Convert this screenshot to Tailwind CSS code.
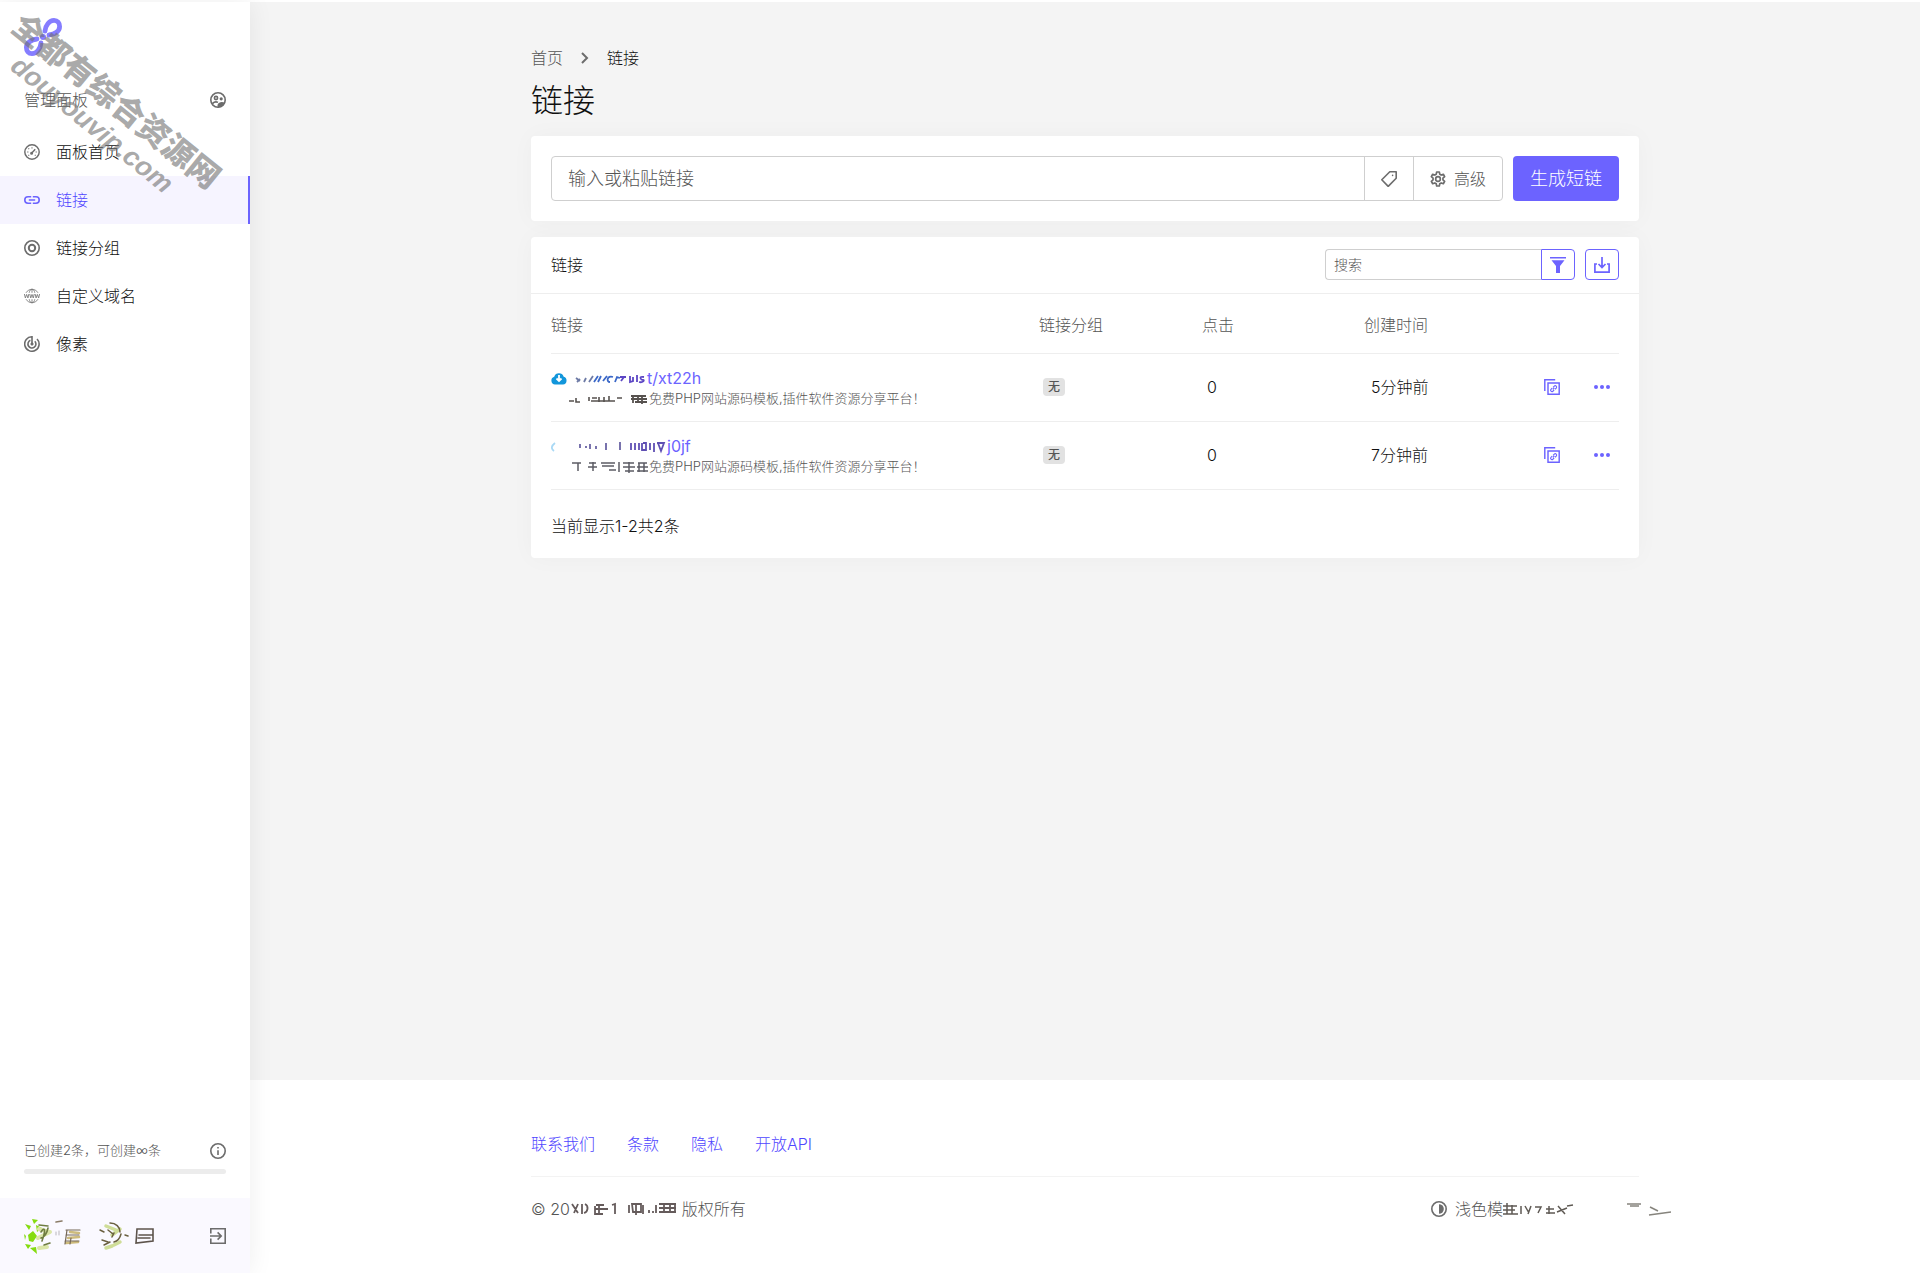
<!DOCTYPE html>
<html lang="zh-CN">
<head>
<meta charset="utf-8">
<title>链接</title>
<script src="https://cdn.jsdelivr.net/npm/@tailwindcss/browser@4"></script>
</head>
<body class="relative min-h-screen bg-white pt-[2px] pr-px text-base text-[#101010] [font-family:Inter,'Noto_Sans_CJK_SC',sans-serif] font-light">
<div class="flex min-h-[calc(100vh-2px)]">

  <aside class="relative z-10 flex w-[250px] shrink-0 flex-col bg-white shadow-[0_0_24px_rgba(0,0,0,0.07)]">
    <a href="#" aria-label="首页" class="mt-4 ml-6 block size-[38px]">
      <svg class="size-full" viewBox="0 0 38 38" fill="none" stroke="#857dff" stroke-width="4.800" stroke-linecap="round">
        <path d="M21 13C21.500 7 25.500 2.400 30 2.400C33.500 2.400 35.600 5 35.600 8.500C35.600 13 31 16.500 25 17"/>
        <path d="M17 25C16.500 31 12.500 35.600 8 35.600C4.500 35.600 2.400 33 2.400 29.500C2.400 25 7 21.500 13 21"/>
        <circle cx="19" cy="19" r="3" fill="#857dff" stroke="none"/>
      </svg>
    </a>
    <div class="mt-8 flex h-6 items-center justify-between px-6 text-[#555]">
      <span>管理面板</span>
      <svg class="size-4" viewBox="0 0 20 20" fill="none" stroke="#6c6c6c" stroke-width="2"><circle cx="10" cy="10" r="9"/><circle cx="7.500" cy="7.500" r="2"/><circle cx="14" cy="8.500" r="1" /><path d="M3 14.500c2-2 5-2.500 7-1.500"/><path d="M10.500 18.500c-1-4 3-6 7-4.500c-1.500 2.500-4 4-7 4.500z" fill="#6c6c6c"/></svg>
    </div>
    <nav class="mt-4 flex flex-col text-[#101010]">
      <a href="#" class="flex h-12 items-center gap-4 px-6">
        <svg class="size-4" viewBox="0 0 20 20" fill="none" stroke="#6c6c6c" stroke-width="1.800"><circle cx="10" cy="10" r="9"/><path d="M9.500 11.500l4.500-5"/><circle cx="9.500" cy="11.500" r="1" /><path d="M4 10h1.500M10 4v1.500M5.500 5.500l1 1M14.500 10H16M5.500 14.500l1-1M14.500 14.500l-1-1" stroke-width="1.300"/></svg>
        <span>面板首页</span>
      </a>
      <a href="#" aria-current="page" class="flex h-12 items-center gap-4 border-r-2 border-[#6c63ff] bg-[#f6f4ff] px-6 text-[#5046ff]">
        <svg class="size-4" viewBox="0 0 20 20" fill="none" stroke="#6c63ff" stroke-width="2"><path d="M9 6H5a4 4 0 0 0 0 8h4M11 6h4a4 4 0 0 1 0 8h-4M6 10h8"/></svg>
        <span>链接</span>
      </a>
      <a href="#" class="flex h-12 items-center gap-4 px-6">
        <svg class="size-4" viewBox="0 0 20 20" fill="none" stroke="#6c6c6c" stroke-width="2"><circle cx="10" cy="10" r="9"/><circle cx="10" cy="10" r="4" stroke-width="2.500"/></svg>
        <span>链接分组</span>
      </a>
      <a href="#" class="flex h-12 items-center gap-4 px-6">
        <svg class="size-4" viewBox="0 0 20 20" fill="none" stroke="#7a7a7a" stroke-width="1.100"><path d="M2.500 6C6 .2 14 .2 17.500 6M2.500 14C6 19.800 14 19.800 17.500 14M6.500 6c.5-2.500 1.500-4.500 3.500-4.500S13 3.500 13.500 6M6.500 14c.5 2.500 1.500 4.500 3.500 4.500s3-2 3.500-4.500M10 1.500V6M10 14v4.500"/><path d="M.5 7.500l1.200 5L3.300 8l1.600 4.500 1.200-5M7.200 7.500l1.200 5L10 8l1.600 4.500 1.200-5M13.900 7.500l1.200 5L16.700 8l1.600 4.500 1.200-5"/></svg>
        <span>自定义域名</span>
      </a>
      <a href="#" class="flex h-12 items-center gap-4 px-6">
        <svg class="size-4" viewBox="0 0 20 20" fill="none" stroke="#6c6c6c" stroke-width="2"><path d="M16.300 3.700A9 9 0 1 1 10 1v9"/><path d="M13.500 6.500A5 5 0 1 1 8 5.400"/><circle cx="10" cy="10" r="1.500" fill="#6c6c6c" stroke-width="1"/></svg>
        <span>像素</span>
      </a>
    </nav>

    <div class="mt-auto flex h-5 items-center justify-between px-6 text-[13px] text-[#555]">
      <span>已创建2条，可创建∞条</span>
      <svg class="size-4" viewBox="0 0 20 20" fill="none" stroke="#6c6c6c" stroke-width="2"><circle cx="10" cy="10" r="9"/><path d="M10 9v6M10 5v2"/></svg>
    </div>
    <div class="mx-6 mt-2 mb-6 h-[5px] rounded bg-[#ececec]"></div>
    <div class="flex h-[75px] items-center justify-between bg-[#faf9ff] px-6">
      <svg class="h-9 w-36" viewBox="0 0 144 36" aria-hidden="true">
        <g fill="#85dc10"><path d="M1 6l6 2-2 4zM8 1l6 1-4 4zM4 17l5-4 4 5-4 6-4-1zM0 16l2 2-1 4zM1 26l6 1-3 4zM6 30l6-1 1 7zM12 7l6 3-5 4z"/></g>
        <g fill="none" stroke-linecap="round"><path d="M15 11l10 3M14 20l12-6M15 30l8-1" stroke="#dbe6a8" stroke-width="4"/><path d="M15 7l9 1M17 14c4-6 5-2 1 9M24 10c-1 5-4 9-7 10M20 27l6-2" stroke="#6f7d42" stroke-width="1.600"/><path d="M32 14v3M35 13v4" stroke="#b9b6bd"/><path d="M32 4l6-1" stroke="#8a7c68" stroke-width="1.600"/><path d="M46 14l9 1M44 20l11-1M42 25l12-1" stroke="#cdbb7c" stroke-width="2.500"/><path d="M42 12h14M42 17h13M41 23h14M43 12l-2 14M47 20l-1 6" stroke="#756856" stroke-width="1.200"/><path d="M82 8l10 4M88 17l8-6M82 30l6-2M90 27l6-3" stroke="#cfdd98" stroke-width="3.500"/><path d="M76 12l4 2M78 22l6 2M86 5c6 0 10 4 10 9M84 12l5 4M90 24c4-1 6-4 7-8M80 27l6-3M101 17l3 1M88 19l2-4" stroke="#6a6040" stroke-width="1.500"/><path d="M113 11h16v12l-17 2zM115 17h13M114 20h12" stroke="#5d544c" stroke-width="1.600"/></g>
      </svg>
      <button type="button" aria-label="退出"><svg class="size-4" viewBox="0 0 20 20" fill="none" stroke="#6c6c6c" stroke-width="2"><path d="M1 7V1h18v18H1v-6M0 10h13M9.500 5.500L14 10l-4.500 4.500"/></svg></button>
    </div>
  </aside>

  <div class="flex min-w-0 grow flex-col bg-[#f4f4f4]">
    <main class="mx-auto w-full max-w-[1140px] grow px-4 pt-11">
      <nav aria-label="面包屑" class="flex h-6 items-center text-[#101010]">
        <a href="#" class="text-[#555]">首页</a>
        <svg class="mx-4 h-3 w-[11px]" viewBox="0 0 11 12" fill="none" stroke="#6c6c6c" stroke-width="2"><path d="M3 1l5 5-5 5"/></svg>
        <span class="ml-px">链接</span>
      </nav>
      <h1 class="mt-3 mb-4 text-[32px] leading-[38px]">链接</h1>

      <form class="flex gap-[10px] rounded bg-white p-5 shadow-[0_0_24px_rgba(0,0,0,0.03)]">
        <div class="flex h-[45px] grow rounded border border-[#cfcfcf]">
          <input type="text" aria-label="链接" placeholder="输入或粘贴链接" class="min-w-0 grow px-4 text-lg outline-none placeholder:text-[#555]">
          <button type="button" aria-label="标签" class="flex w-[49px] items-center justify-center border-l border-[#cfcfcf]">
            <svg class="size-4" viewBox="0 0 20 20" fill="none" stroke="#6c6c6c" stroke-width="2"><path d="M11 1h8v8L9 19.200 1 11z" stroke-linejoin="round"/><circle cx="14.500" cy="5.500" r="1" fill="#6c6c6c" stroke="none"/></svg>
          </button>
          <button type="button" class="flex w-[89px] items-center justify-center gap-2 border-l border-[#cfcfcf] text-[#555]">
            <svg class="size-4" viewBox="0 0 24 24" fill="none" stroke="#6c6c6c" stroke-width="2.500"><path d="M10 1.500h4l.6 3.300 2.200 1.300 3.200-1.200 2 3.500-2.600 2.300v2.600l2.600 2.300-2 3.500-3.200-1.200-2.200 1.300-.6 3.300h-4l-.6-3.300-2.200-1.300L4 19.100l-2-3.500 2.600-2.300v-2.600L2 8.400l2-3.500 3.200 1.200 2.200-1.300z" stroke-linejoin="round"/><circle cx="12" cy="12" r="3.500"/></svg>
            <span>高级</span>
          </button>
        </div>
        <button type="submit" class="h-[45px] w-[106px] rounded bg-[#6c63ff] text-lg text-white">生成短链</button>
      </form>

      <section class="mt-4 rounded bg-white shadow-[0_0_24px_rgba(0,0,0,0.03)]">
        <div class="flex h-[57px] justify-between border-b border-[#eeeeee] px-5 pt-3">
          <h2 class="text-base leading-8">链接</h2>
          <form class="flex">
            <input type="text" aria-label="搜索" placeholder="搜索" class="h-[31px] w-[216px] rounded-l border border-r-0 border-[#cfcfcf] px-2 text-sm outline-none placeholder:text-[#555]">
            <button type="button" aria-label="筛选" class="flex h-[31px] w-[34px] items-center justify-center rounded-r border border-[#6c63ff]">
              <svg class="size-4" viewBox="0 0 16 16" fill="#6c63ff"><path d="M0 0h16v1.600H0zM1.500 3.200h13L10 9v7H6V9z"/></svg>
            </button>
            <button type="button" aria-label="导出" class="ml-[10px] flex h-[31px] w-[34px] items-center justify-center rounded border border-[#6c63ff]">
              <svg class="size-4" viewBox="0 0 16 16" fill="none" stroke="#6c63ff" stroke-width="1.700"><path d="M3 7H.9v8.100h14.200V7H13M8 0v10.500M4.500 7L8 10.500 11.500 7"/></svg>
            </button>
          </form>
        </div>
        <div class="px-5">
          <table class="w-full table-fixed text-left">
            <colgroup><col><col class="w-[163px]"><col class="w-[162px]"><col class="w-[162px]"><col class="w-[93px]"></colgroup>
            <thead>
              <tr class="h-[59px] border-b border-[#eeeeee] text-[#555] [&>th]:p-0 [&>th]:pt-1 [&>th]:font-light">
                <th>链接</th><th>链接分组</th><th>点击</th><th>创建时间</th><th aria-label="操作"></th>
              </tr>
            </thead>
            <tbody>
              <tr class="h-[68px] border-b border-[#eeeeee]">
                <td class="p-0">
                  <div class="flex h-6 items-center pt-[2px]">
                    <svg class="size-4" viewBox="0 0 16 16"><path d="M4 14.500a4 4 0 0 1-.8-7.800 5 5 0 0 1 9.500 0A4 4 0 0 1 12 14.500z" fill="#1296db"/><path d="M8 5v6M5.500 8.500L8 11l2.500-2.500" stroke="#fff" stroke-width="1.800" fill="none"/></svg>
                    <svg class="ml-2 h-4 w-[72px] shrink-0" viewBox="0 0 72 16" aria-hidden="true" fill="none" stroke-width="1.800"><path d="M1 8l4 3M2 12l3-3M9 12l2-4M14 12l4-6" stroke="#6d7aa5"/><path d="M19 12l4-6M23 12l3-6M28 11l4-5M38 7c-6-2-7 5-3 5M40 12l2-5 3 1" stroke="#3b68c8"/><path d="M46 11l3-4M45 7h6M55 6v6l3-1V7M62 5v7M69 7c-6-1-3 3-1 3s0 3-4 2" stroke="#5c46c4"/></svg>
                    <a href="#" class="font-normal text-[#6c63ff]">t/xt22h</a>
                  </div>
                  <div class="flex h-5 items-center text-[13px] text-[#555]">
                    <svg class="ml-4 h-3 w-[82px] shrink-0" viewBox="0 0 82 12" aria-hidden="true" fill="none" stroke="#57524f"><path d="M2 8h5M9 5v4h4M22 4v4M25 5h5M24 8h24M32 4v5M37 4v5M42 3v5M50 5h5" stroke-width="1.600"/><path d="M64 3h15M64 6h16M66 2v8M71 2v8M75 3v8M68 9h12" stroke-width="1.800"/></svg>
                    <span class="truncate">免费PHP网站源码模板,插件软件资源分享平台！</span>
                  </div>
                </td>
                <td class="p-0"><span class="ml-1 flex h-[18px] w-[22px] items-center justify-center rounded bg-[#e2e2e2] text-xs font-medium text-[#555]">无</span></td>
                <td class="p-0 pl-[5px]">0</td>
                <td class="p-0 pl-[7px]">5分钟前</td>
                <td class="p-0"><div class="flex items-center justify-end gap-[34px] pr-[9px]">
                  <button type="button" aria-label="复制"><svg class="size-4" viewBox="0 0 20 20" fill="none" stroke="#6c63ff" stroke-width="1.800"><path d="M1 15V1h13M5 5h14v14H5z"/><path d="M11.300 10.500l1.600-1.600a1.700 1.700 0 0 1 2.400 2.400l-1.500 1.500M12.700 13.700l-1.600 1.600a1.700 1.700 0 0 1-2.400-2.400l1.500-1.500M11 13l2-2" stroke-width="1.400"/></svg></button>
                  <button type="button" aria-label="更多"><svg class="size-4" viewBox="0 0 16 16" fill="#6c63ff"><circle cx="2" cy="8" r="2"/><circle cx="8" cy="8" r="2"/><circle cx="14" cy="8" r="2"/></svg></button>
                </div></td>
              </tr>
              <tr class="h-[68px] border-b border-[#eeeeee]">
                <td class="p-0">
                  <div class="flex h-6 items-center pt-[2px]">
                    <svg class="h-4 w-[116px] shrink-0" viewBox="0 0 116 16" aria-hidden="true" fill="none" stroke-width="1.800"><path d="M4 5c-4 3-4 6-1 8" stroke="#a9d9f5"/><path d="M29 6v4M35 8v2M39 6v5M45 8v3M55 5v7M69 4v8" stroke="#6b64a5"/><path d="M80 5v7M84 12V5M88 5v7M92 5h3v7h-4V5M99 5v7M103 5v9M106 5h7l-3 8-3-8" stroke="#5f4fb3"/></svg>
                    <a href="#" class="font-normal text-[#6c63ff]">j0jf</a>
                  </div>
                  <div class="flex h-5 items-center text-[13px] text-[#555]">
                    <svg class="ml-5 h-3 w-[78px] shrink-0" viewBox="0 0 78 12" aria-hidden="true" fill="none" stroke="#5c5c64"><path d="M1 2h9M7 2v8M18 2h7M17 6h9M22 1v9M30 2h14M31 5h12M38 9h7M48 1v10M52 2h11M52 6h12M54 10h9M58 1v11M67 2h9M66 6h11M68 2v9M73 2v9M66 10h11" stroke-width="1.500"/></svg>
                    <span class="truncate">免费PHP网站源码模板,插件软件资源分享平台！</span>
                  </div>
                </td>
                <td class="p-0"><span class="ml-1 flex h-[18px] w-[22px] items-center justify-center rounded bg-[#e2e2e2] text-xs font-medium text-[#555]">无</span></td>
                <td class="p-0 pl-[5px]">0</td>
                <td class="p-0 pl-[7px]">7分钟前</td>
                <td class="p-0"><div class="flex items-center justify-end gap-[34px] pr-[9px]">
                  <button type="button" aria-label="复制"><svg class="size-4" viewBox="0 0 20 20" fill="none" stroke="#6c63ff" stroke-width="1.800"><path d="M1 15V1h13M5 5h14v14H5z"/><path d="M11.300 10.500l1.600-1.600a1.700 1.700 0 0 1 2.400 2.400l-1.500 1.500M12.700 13.700l-1.600 1.600a1.700 1.700 0 0 1-2.400-2.400l1.500-1.500M11 13l2-2" stroke-width="1.400"/></svg></button>
                  <button type="button" aria-label="更多"><svg class="size-4" viewBox="0 0 16 16" fill="#6c63ff"><circle cx="2" cy="8" r="2"/><circle cx="8" cy="8" r="2"/><circle cx="14" cy="8" r="2"/></svg></button>
                </div></td>
              </tr>
            </tbody>
          </table>
          <p class="pt-6 pb-5">当前显示1-2共2条</p>
        </div>
      </section>
    </main>

    <footer class="h-[193px] bg-white pt-[52px]">
      <div class="mx-auto w-full max-w-[1140px] px-4">
        <nav aria-label="页脚" class="flex gap-8 border-b border-[#f3f3f3] pb-5 text-[#5046ff]">
          <a href="#">联系我们</a><a href="#">条款</a><a href="#">隐私</a><a href="#">开放API</a>
        </nav>
        <div class="flex items-center justify-between pt-5 text-[#555]">
          <div class="flex items-center">
            <span>© 20</span>
            <svg class="h-4 w-28" viewBox="0 0 112 16" aria-hidden="true" fill="none" stroke="#655b5b" stroke-width="1.800"><path d="M2 3l6 9M8 3l-4 9M12 3v10M15 3c4 2 3 8-1 9M25 5v8h8M26 4h8M29 5v8M25 8h9M34 8h4M42 4l3-1v10M59 4v8M62 3h9v8h-8zM66 2v12M73 4v9M79 9v3M83 10v2M86 4v8M89 3h17M89 7h17M89 11h17M94 3v9M100 3v9M105 4v8"/></svg>
            <span>版权所有</span>
          </div>
          <div class="flex w-[208px] items-center">
            <svg class="size-4 shrink-0" viewBox="0 0 20 20" fill="none" stroke="#6c6c6c" stroke-width="2"><circle cx="10" cy="10" r="9"/><path d="M10 4a6 6 0 0 1 0 12z" fill="#6c6c6c" stroke="none"/></svg>
            <button type="button" class="ml-2 shrink-0">浅色模</button>
            <svg class="h-4 w-[170px] shrink-0" viewBox="0 0 170 16" aria-hidden="true" fill="none" stroke="#5f5a54" stroke-width="1.500"><path d="M0 5h14M4 2v11M0 9h12M9 4v9M0 13h15M18 5v8M22 5l4 7M28 5l-3 8M32 6h6l-3 6M46 5v8M43 8h8M43 12h9M55 5l7 8M54 11l10-4M64 5l6-1"/><path d="M124 3h14M127 5h9M147 6l8 4M146 14l22-3" stroke="#86847d"/></svg>
          </div>
        </div>
      </div>
    </footer>
  </div>
</div>

<div class="pointer-events-none absolute top-[7px] left-[28px] z-20 origin-top-left rotate-[39deg] font-black text-[#707070]/60" aria-hidden="true">
  <p class="text-[32px] leading-[36px] whitespace-nowrap">全都有综合资源网</p>
  <p class="ml-6 text-[27px] leading-[30px] font-bold whitespace-nowrap italic [font-family:'Liberation_Sans',sans-serif]">douyouvip.com</p>
</div>
</body>
</html>
